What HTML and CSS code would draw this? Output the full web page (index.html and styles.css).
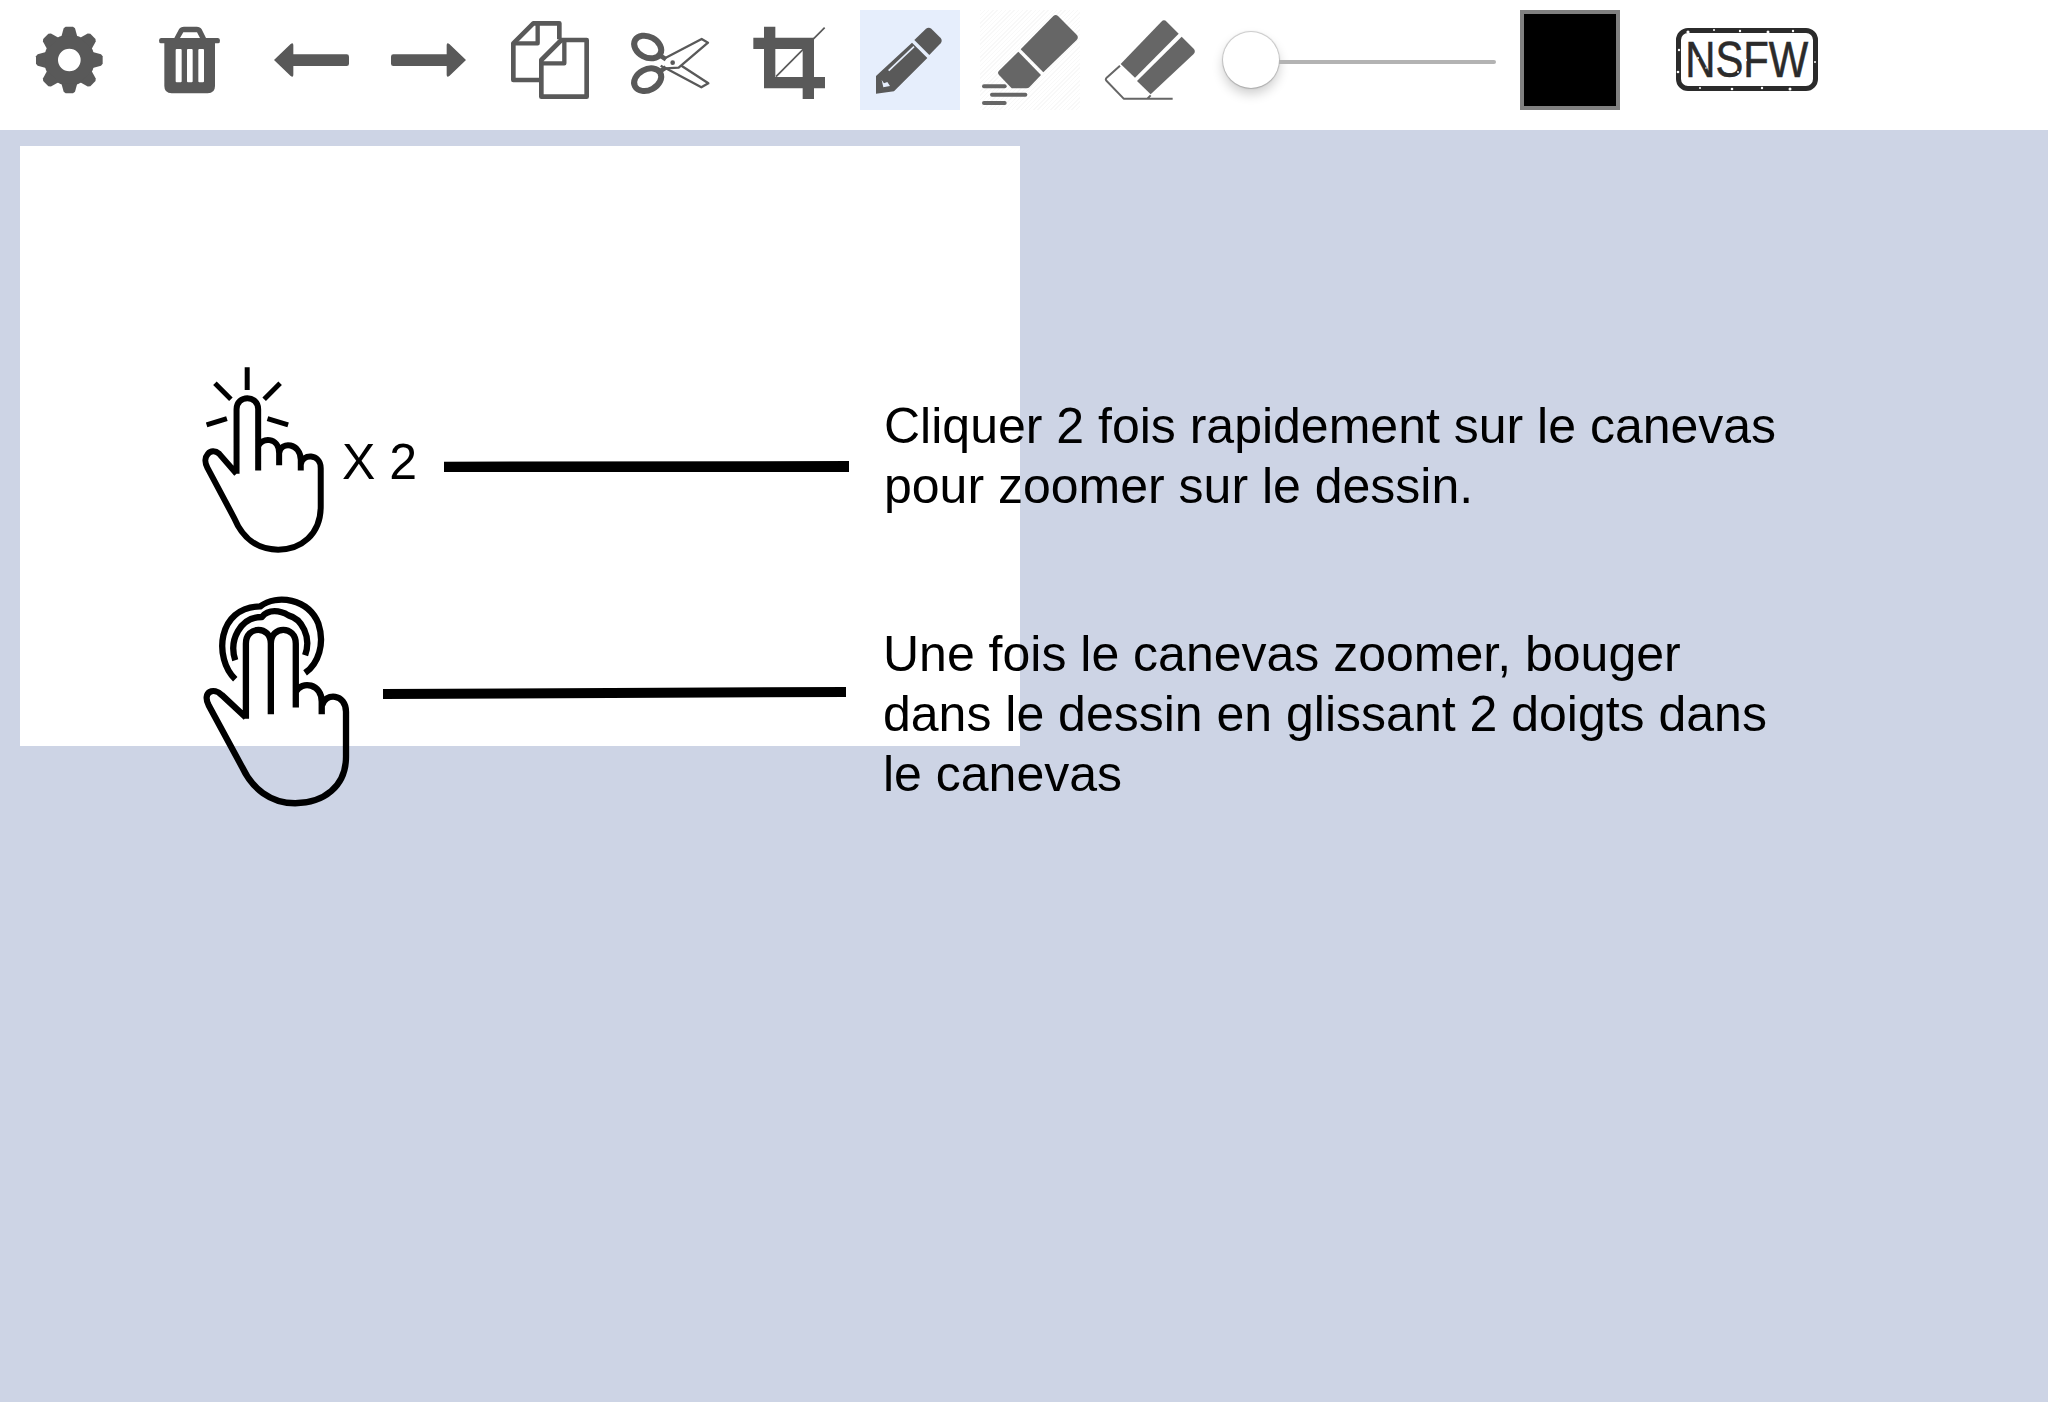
FILE: index.html
```html
<!DOCTYPE html>
<html lang="fr">
<head>
  <meta charset="UTF-8" />
  <title>Dessin</title>
  <link rel="stylesheet" href="styles.css">
</head>
<body>

<header class="toolbar">
  <button class="tool">
    <svg viewBox="60 30 300 300">
      <g transform="translate(208 180)">
        <circle r="55" fill="none" stroke="#595959" stroke-width="42"/>
        <g fill="#595959">
          <polygon id="tooth" points="-24,-70 -17,-95 -11,-100 11,-100 17,-95 24,-70"/>
          <use href="#tooth" transform="rotate(45)"/>
          <use href="#tooth" transform="rotate(90)"/>
          <use href="#tooth" transform="rotate(135)"/>
          <use href="#tooth" transform="rotate(180)"/>
          <use href="#tooth" transform="rotate(225)"/>
          <use href="#tooth" transform="rotate(270)"/>
          <use href="#tooth" transform="rotate(315)"/>
        </g>
      </g>
    </svg>
  </button>
  <button class="tool">
    <svg viewBox="420 30 300 300">
      <path fill="#595959" fill-rule="evenodd" d="M483 114H523L537 88Q541 80 552 80H590Q601 80 605 88L618 114H654Q660 114 660 122Q660 130 654 130H645V258Q645 280 623 280H515Q493 280 493 258V130H483Q477 130 477 122Q477 114 483 114ZM540 114H600L591 97H550ZM530 147Q527 147 527 150V244Q527 247 530 247H542Q545 247 545 244V150Q545 147 542 147ZM564 147Q561 147 561 150V244Q561 247 564 247H575Q578 247 578 244V150Q578 147 575 147ZM598 147Q595 147 595 150V244Q595 247 598 247H609Q612 247 612 244V150Q612 147 609 147Z"/>
    </svg>
  </button>
  <button class="tool">
    <svg viewBox="780 30 300 300">
      <path fill="#595959" d="M822 180L872 132Q880 126 880 136V163H1040Q1047 163 1047 170V191Q1047 198 1040 198H880V224Q880 234 872 228Z"/>
    </svg>
  </button>
  <button class="tool">
    <svg viewBox="1140 30 300 300">
      <path fill="#595959" d="M1398 180L1348 132Q1340 126 1340 136V163H1180Q1173 163 1173 170V191Q1173 198 1180 198H1340V224Q1340 234 1348 228Z"/>
    </svg>
  </button>
  <button class="tool">
    <svg viewBox="60 30 300 300">
      <g fill="none" stroke="#595959" stroke-width="14" stroke-linejoin="round">
        <path d="M185 240H100V130L160 70H238V118"/>
        <path d="M173 72V130H104" stroke-width="13"/>
        <path d="M320 120V290H184V180L244 120Z"/>
        <path d="M253 124V190H188" stroke-width="13"/>
      </g>
    </svg>
  </button>
  <button class="tool">
    <svg viewBox="420 30 300 300">
      <g fill="none" stroke="#595959" stroke-linejoin="round">
        <ellipse cx="503" cy="141" rx="43" ry="31" transform="rotate(28 503 141)" stroke-width="18"/>
        <ellipse cx="503" cy="239" rx="43" ry="31" transform="rotate(-28 503 239)" stroke-width="18"/>
        <path d="M540 166L558 178M540 214L558 202" stroke-width="14"/>
        <path d="M556 174L665 117L684 128L596 203L556 205L542 197" stroke-width="7"/>
        <path d="M602 196L685 250L664 262L556 204" stroke-width="7"/>
      </g>
      <circle cx="578" cy="188" r="7" fill="#595959"/>
    </svg>
  </button>
  <button class="tool">
    <svg viewBox="780 30 300 300">
      <path fill="#595959" fill-rule="evenodd" d="M852 80H886V113H1002V231H1035V265H1002V297H968V265H852V147H820V113H852ZM886 147V231H968V147Z"/>
      <path fill="none" stroke="#595959" stroke-width="5" d="M888 230L1034 83"/>
    </svg>
  </button>
  <button class="tool tool-active">
    <svg viewBox="1140 30 300 300">
      <path fill="#595959" d="M1303 120L1338 86Q1346 80 1354 86L1382 114Q1388 122 1382 130L1348 165Z"/>
      <path fill="#595959" fill-rule="evenodd" d="M1296 128L1342 174L1242 274L1188 281V228ZM1205 240L1212 250L1222 246L1230 258L1210 262Z"/>
      <path fill="none" stroke="#e6eefc" stroke-width="5" d="M1226 212L1302 140"/>
    </svg>
  </button>
  <button class="tool tool-hatched">
    <svg viewBox="60 30 300 300">
      <g fill="#666666">
        <path d="M280 48Q287 42 294 48L350 104Q357 112 350 120L250 217L182 148Z"/>
        <path d="M175 155L243 225L208 262Q205 265 200 265H155L117 225Q111 218 117 212Z"/>
        <rect x="66" y="253" width="74" height="12" rx="6"/>
        <rect x="90" y="278" width="112" height="12" rx="6"/>
        <rect x="66" y="303" width="74" height="12" rx="6"/>
      </g>
    </svg>
  </button>
  <button class="tool">
    <svg viewBox="420 30 300 300">
      <g fill="#666666">
        <path d="M604 65Q612 57 620 65L656 101L525 233L482 192Z"/>
        <path d="M665 110L701 146Q708 154 701 162L572 283L531 243Z"/>
      </g>
      <path fill="none" stroke="#666666" stroke-width="6" stroke-linejoin="round" d="M480 197L440 233Q435 238 440 243L491 296H638M491 296H562L572 286"/>
    </svg>
  </button>
  <div class="slider">
    <div class="slider-thumb"></div>
    <div class="slider-track"></div>
  </div>
  <div class="color-box"></div>
  <div class="nsfw">
    <span class="nsfw-text">NSFW</span>
    <svg class="nsfw-wear" viewBox="0 0 142 63">
      <g fill="#ffffff">
        <circle cx="12" cy="4" r="1.6"/><circle cx="38" cy="2" r="1"/><circle cx="64" cy="3" r="1.2"/>
        <circle cx="92" cy="4" r="1.5"/><circle cx="117" cy="3" r="1.2"/><circle cx="3" cy="22" r="1.2"/>
        <circle cx="2" cy="44" r="1.3"/><circle cx="24" cy="60" r="1"/><circle cx="56" cy="61" r="1.3"/>
        <circle cx="86" cy="60" r="1.2"/><circle cx="114" cy="61" r="1.5"/><circle cx="139" cy="34" r="1"/>
        <circle cx="70" cy="32" r="1.2"/><circle cx="82" cy="42" r="1"/><circle cx="22" cy="30" r="1"/>
        <circle cx="62" cy="44" r="1"/><circle cx="88" cy="24" r="1"/><circle cx="30" cy="40" r="0.8"/>
      </g>
    </svg>
  </div>
</header>

<main class="workspace">
  <div class="canvas"></div>

  <div class="help">
    <div class="help-row">
      <svg class="hand-tap" viewBox="60 45 380 565">
        <g fill="none" stroke="#000" stroke-width="18" stroke-linejoin="round">
          <path d="M172 372V178C172 134 237 134 237 178V362M237 290C245 262 300 260 300 310V346M300 310C305 272 365 280 365 330V362M365 345C368 310 425 310 425 355V470C425 555 365 600 297 600C235 600 190 565 165 505L85 355C65 320 95 290 120 312L172 372"/>
          <path d="M204 52V120M107 100L155 148M303 100L255 148M82 225L143 206M327 225L265 206" stroke-width="15"/>
        </g>
      </svg>
      <span class="help-times">X 2</span>
      <svg class="help-line-tap" viewBox="0 0 405 11"><polygon points="0,0.7 405,0 405,11 0,11"/></svg>
      <p class="help-text help-text-tap">Cliquer 2 fois rapidement sur le canevas<br>pour zoomer sur le dessin.</p>
    </div>
    <div class="help-row">
      <svg class="hand-slide" viewBox="65 45 445 635">
        <g fill="none" stroke="#000" stroke-width="19" stroke-linejoin="round">
          <path d="M197 416V190C197 135 272 135 272 190V402M272 190C272 135 347 135 347 190V382M347 335C365 300 425 310 425 365V402M425 378C435 335 498 340 498 395V530C498 620 430 670 345 670C270 670 215 625 185 560L85 375C65 335 100 320 125 345L197 412"/>
          <path d="M165 240C145 180 180 110 245 110C265 85 300 90 325 105C365 115 395 170 375 225"/>
          <path d="M165 297C100 235 110 80 240 78C290 40 385 55 415 130C435 190 415 250 375 278"/>
        </g>
      </svg>
      <svg class="help-line-slide" viewBox="0 0 463 12"><polygon points="0,2 463,0 463,10 0,12"/></svg>
      <p class="help-text help-text-slide">Une fois le canevas zoomer, bouger<br>dans le dessin en glissant 2 doigts dans<br>le canevas</p>
    </div>
  </div>
</main>

</body>
</html>
```
FILE: styles.css
```css
html, body {
  margin: 0;
  height: 100%;
}
body {
  display: flex;
  flex-direction: column;
  background: #cdd4e5;
  font-family: "Liberation Sans", Arial, sans-serif;
  color: #000;
  overflow: hidden;
}

/* top bar */
.toolbar {
  display: flex;
  align-items: flex-start;
  gap: 20px;
  height: 130px;
  padding: 10px 20px 0;
  background: #fff;
  box-sizing: border-box;
  flex: none;
}
.tool {
  width: 100px;
  height: 100px;
  padding: 0;
  border: none;
  background: none;
  flex: none;
}
.tool svg {
  display: block;
  width: 100px;
  height: 100px;
}
.tool-active {
  background: #e6eefc;
}
.tool-hatched {
  background: repeating-linear-gradient(135deg, #f8f8f8 0 1px, #fff 1px 3px);
}
.slider {
  display: flex;
  align-items: center;
  width: 280px;
  height: 100px;
  padding: 4px 4px 0 3px;
  box-sizing: border-box;
  flex: none;
}
.slider-thumb {
  width: 56px;
  height: 56px;
  margin-top: -4px;
  border-radius: 50%;
  background: #fff;
  box-shadow: 0 0 1px 1px rgba(0,0,0,0.2), 0 6px 12px rgba(0,0,0,0.2);
  flex: none;
}
.slider-track {
  flex: 1;
  height: 4px;
  border-radius: 0 2px 2px 0;
  background: #b3b3b3;
}
.color-box {
  width: 100px;
  height: 100px;
  border: 4px solid #808080;
  background: #000;
  box-sizing: border-box;
  flex: none;
}
.nsfw {
  position: relative;
  display: flex;
  align-items: center;
  justify-content: center;
  width: 142px;
  height: 63px;
  margin-left: 36px;
  margin-top: 18px;
  border: 5.5px solid #2b2b2b;
  border-radius: 12px;
  box-sizing: border-box;
  flex: none;
}
.nsfw-text {
  font-size: 44px;
  line-height: 50px;
  color: #2b2b2b;
  -webkit-text-stroke: 0.5px #2b2b2b;
  transform: scale(0.95, 1.14);
}
.nsfw-wear {
  position: absolute;
  left: -5.5px;
  top: -5.5px;
  width: 142px;
  height: 63px;
}

/* drawing area */
.workspace {
  position: relative;
  flex: 1;
  padding: 16px 20px;
}
.canvas {
  width: 1000px;
  height: 600px;
  background: #fff;
}

/* help picture over the canvas */
.help {
  position: absolute;
  left: 202px;
  top: 235px;
  display: flex;
  flex-direction: column;
  gap: 42px;
}
.help-row {
  display: flex;
  align-items: flex-start;
}
.help-row svg {
  flex: none;
}
.hand-tap {
  width: 127px;
  height: 188px;
  margin-left: -3px;
}
.hand-slide {
  width: 148px;
  height: 212px;
}
.help-times {
  width: 102px;
  margin-left: 16px;
  margin-top: 67px;
  font-size: 50px;
  line-height: 60px;
  flex: none;
}
.help-line-tap {
  width: 405px;
  height: 11px;
  margin-top: 96px;
}
.help-line-slide {
  width: 463px;
  height: 12px;
  margin-left: 33px;
  margin-top: 92px;
}
.help-text {
  margin: 0;
  font-size: 50px;
  line-height: 60px;
  white-space: nowrap;
}
.help-text-tap {
  margin-left: 35px;
  margin-top: 31px;
}
.help-text-slide {
  margin-left: 37px;
  margin-top: 29px;
}
```
